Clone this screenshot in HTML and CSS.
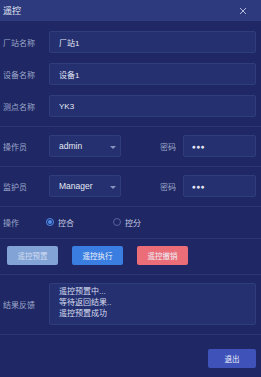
FILE: index.html
```html
<!DOCTYPE html>
<html lang="zh-CN">
<head>
    <meta charset="UTF-8">
    <title>遥控</title>
    <link rel="stylesheet" href="styles.css">
</head>
<body>
    <div class="dialog">
        <div class="header">
            <span class="title">遥控</span>
            <svg class="close" width="8" height="8" viewBox="0 0 8 8">
                <path d="M1 1 L7 7 M7 1 L1 7" stroke="#b4bbda" stroke-width="1"/>
            </svg>
        </div>

        <!-- station info -->
        <div class="section info">
            <div class="row">
                <span class="label">厂站名称</span>
                <div class="field">厂站1</div>
            </div>
            <div class="row">
                <span class="label">设备名称</span>
                <div class="field">设备1</div>
            </div>
            <div class="row">
                <span class="label">测点名称</span>
                <div class="field">YK3</div>
            </div>
        </div>

        <!-- operator / guardian -->
        <div class="section user">
            <div class="row">
                <span class="label">操作员</span>
                <div class="field select">admin<span class="arrow"></span></div>
                <span class="label pwd-label">密码</span>
                <div class="field pwd">●●●</div>
            </div>
        </div>
        <div class="section user">
            <div class="row">
                <span class="label">监护员</span>
                <div class="field select">Manager<span class="arrow"></span></div>
                <span class="label pwd-label">密码</span>
                <div class="field pwd">●●●</div>
            </div>
        </div>

        <div class="section op">
            <div class="row">
                <span class="label">操作</span>
                <div class="radios">
                    <label class="radio"><span class="dot checked"></span>控合</label>
                    <label class="radio"><span class="dot"></span>控分</label>
                </div>
            </div>
        </div>

        <div class="section actions">
            <button class="btn preset">遥控预置</button>
            <button class="btn exec">遥控执行</button>
            <button class="btn cancel">遥控撤销</button>
        </div>

        <div class="section result">
            <div class="row">
                <span class="label">结果反馈</span>
                <div class="field output">遥控预置中...
等待返回结果..
遥控预置成功</div>
            </div>
        </div>

        <div class="footer">
            <button class="btn quit">退出</button>
        </div>
    </div>
</body>
</html>
```

FILE: styles.css
```css
body {
    margin: 0;
    background-color: #1f2864;
    font-family: "Liberation Sans", "Noto Sans CJK SC", sans-serif;
    font-size: 8px;
    color: #e4e8f5;
}

.dialog {
    width: 261px;
    height: 377px;
    display: flex;
    flex-direction: column;
}

.header {
    height: 21px;
    background-color: #2d3b7e;
    display: flex;
    align-items: center;
    justify-content: space-between;
    padding: 0 14px 0 3px;
}

.title {
    font-size: 9px;
    color: #e3e7f5;
}

.section {
    border-bottom: 1px solid #2b3675;
    padding: 0 5px 0 3px;
}

.info {
    padding-top: 10px;
    padding-bottom: 9px;
    display: flex;
    flex-direction: column;
    gap: 10px;
}

.user {
    padding-top: 8px;
    padding-bottom: 9px;
}

.row {
    display: flex;
    align-items: center;
}

.label {
    width: 46px;
    flex-shrink: 0;
    color: #9ea7ca;
}

.field {
    flex: 1;
    height: 22px;
    box-sizing: border-box;
    display: flex;
    align-items: center;
    padding-left: 9px;
    background-color: #24306f;
    border: 1px solid #303d7c;
    border-radius: 2px;
}

.select {
    flex: none;
    width: 72px;
    position: relative;
    font-size: 8.5px;
}

.arrow {
    position: absolute;
    right: 4px;
    top: 10px;
    border-left: 3px solid transparent;
    border-right: 3px solid transparent;
    border-top: 3px solid #8a93bb;
}

.pwd-label {
    width: 23px;
    margin-left: 39px;
}

.pwd {
    font-size: 6.5px;
    letter-spacing: 0.5px;
    padding-left: 8px;
}

.op {
    padding-top: 9px;
    padding-bottom: 10px;
}

.op .row {
    height: 12px;
}

.radios {
    display: flex;
    margin-left: -3px;
}

.radio {
    width: 67px;
    display: flex;
    align-items: center;
    gap: 4px;
    color: #c3c9e2;
}

.dot {
    width: 8px;
    height: 8px;
    box-sizing: border-box;
    border-radius: 50%;
    border: 1px solid #56639e;
    position: relative;
}

.dot.checked {
    border-color: #4f8ff0;
}

.dot.checked::after {
    content: "";
    position: absolute;
    left: 1px;
    top: 1px;
    width: 4px;
    height: 4px;
    border-radius: 50%;
    background-color: #4f8ff0;
}

.actions {
    display: flex;
    gap: 14px;
    padding-top: 7px;
    padding-bottom: 9px;
    padding-left: 7px;
}

.btn {
    width: 51px;
    height: 19px;
    border: none;
    border-radius: 2px;
    font-family: inherit;
    font-size: 7.5px;
    color: #eef2fb;
    padding: 0;
}

.preset {
    background-color: #82a3d5;
    color: #d0dcf1;
}

.exec {
    background-color: #3b7ee2;
}

.cancel {
    background-color: #ea6d78;
}

.result {
    padding-top: 8px;
    padding-bottom: 9px;
}

.output {
    height: 42px;
    display: block;
    white-space: pre-line;
    line-height: 11px;
    padding-top: 2px;
    color: #d8ddef;
}

.footer {
    display: flex;
    justify-content: flex-end;
    padding: 14px 5px 0 0;
}

.quit {
    width: 48px;
    background-color: #3f52ba;
}
```
